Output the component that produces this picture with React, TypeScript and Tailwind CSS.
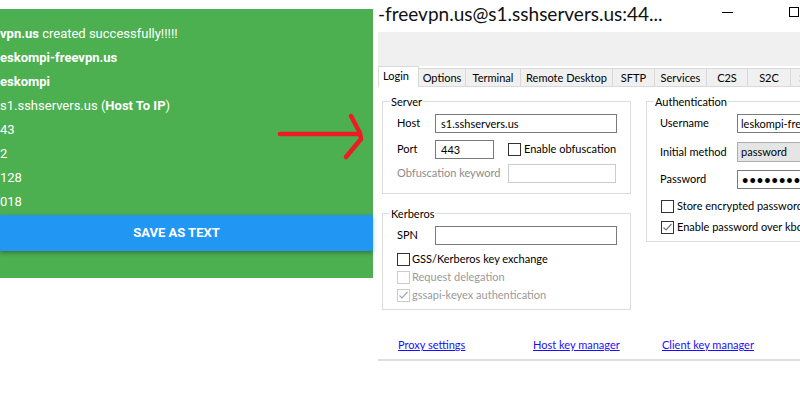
import React from "react";

const ui = "font-['Lato','Liberation_Sans',sans-serif] text-[11px] whitespace-nowrap";

function Box({ checked, disabled }: { checked?: boolean; disabled?: boolean }) {
  return (
    <span
      className={`w-[13px] h-[13px] shrink-0 border bg-white flex items-center justify-center ${
        disabled ? "border-[#cccccc]" : "border-[#333333]"
      }`}
    >
      {checked && (
        <svg width="11" height="11" viewBox="0 0 11 11">
          <path d="M1.5 5.5 L4 8 L9.5 2" fill="none" stroke={disabled ? "#a8a8a8" : "#777777"} strokeWidth="1.2" />
        </svg>
      )}
    </span>
  );
}

function Group({ title, className, children }: { title: string; className?: string; children: React.ReactNode }) {
  return (
    <fieldset className={`border border-[#dcdcdc] p-0 m-0 ${className ?? ""}`}>
      <legend className="ml-[7px] px-[1px] leading-[15px] text-black">{title}</legend>
      {children}
    </fieldset>
  );
}

export default function App() {
  const tabs = [
    { name: "Options", w: "w-[47px]" },
    { name: "Terminal", w: "w-[55px]" },
    { name: "Remote Desktop", w: "w-[92px]" },
    { name: "SFTP", w: "w-[42px]" },
    { name: "Services", w: "w-[52px]" },
    { name: "C2S", w: "w-[41px]" },
    { name: "S2C", w: "w-[43px]" },
  ];

  return (
    <div className="w-[800px] h-[416px] overflow-hidden bg-white relative flex">
      {/* Left: green result card */}
      <div className="w-[373px] shrink-0 mt-[9px] h-[269px] bg-[#4caf50] flex flex-col pt-[13px] font-['Roboto',sans-serif] text-white text-[13px]">
        <div className="h-[24px] leading-[24px] whitespace-nowrap">
          <b>vpn.us</b> created successfully!!!!!
        </div>
        <div className="h-[24px] leading-[24px] font-bold">eskompi-freevpn.us</div>
        <div className="h-[24px] leading-[24px] font-bold">eskompi</div>
        <div className="h-[24px] leading-[24px]">
          s1.sshservers.us (<b>Host To IP</b>)
        </div>
        <div className="h-[24px] leading-[24px]">43</div>
        <div className="h-[24px] leading-[24px]">2</div>
        <div className="h-[24px] leading-[24px]">128</div>
        <div className="h-[24px] leading-[24px]">018</div>
        <div className="mt-[1px] h-[36px] bg-[#2196f3] shadow-[0_2px_4px_rgba(0,0,0,0.3)] flex items-center justify-center pr-[20px] font-bold">
          SAVE AS TEXT
        </div>
      </div>

      <div className="w-[5px] shrink-0" />

      {/* Right: client window */}
      <div className={`flex-1 min-w-0 flex flex-col ${ui}`}>
        <div className="h-[32px] flex">
          <div className="text-[19px] leading-[28px] text-[#111]">-freevpn.us@s1.sshservers.us:44...</div>
          <div className="ml-auto mt-[7px] h-[10px] flex items-center">
            <span className="w-[11px] h-[1px] bg-black" />
            <span className="ml-[56px] mr-[1px] w-[10px] h-[10px] border border-black" />
          </div>
        </div>

        <div className="h-[34px] bg-[#f0f0f0]" />

        {/* Tabs */}
        <div className="h-[21px] flex items-end">
          <div className="w-[41px] h-[21px] shrink-0 bg-white border border-b-0 border-[#d9d9d9] pl-[4px] leading-[18px] text-black">
            Login
          </div>
          {tabs.map((t) => (
            <div
              key={t.name}
              className={`${t.w} h-[19px] shrink-0 bg-[#f0f0f0] border border-l-0 border-[#d9d9d9] text-center leading-[18px] text-black`}
            >
              {t.name}
            </div>
          ))}
          <div className="w-[40px] h-[19px] shrink-0 bg-[#f0f0f0] border border-l-0 border-[#d9d9d9] pl-[8px] leading-[18px] text-[#4a90e2]">
            SSH
          </div>
        </div>

        {/* Tab body */}
        <div className="flex">
          <div className="ml-[4px] w-[249px] shrink-0 flex flex-col">
            <Group title="Server" className="mt-[7px]">
              <div className="pt-[5px] pl-[14px] pr-[13px] pb-[10px]">
                <div className="h-[19px] flex items-center">
                  <span className="w-[38px]">Host</span>
                  <span className="flex-1 h-[19px] border border-[#7a7a7a] px-[5px] leading-[17px]">s1.sshservers.us</span>
                </div>
                <div className="mt-[7px] h-[19px] flex items-center">
                  <span className="w-[38px]">Port</span>
                  <span className="w-[59px] h-[19px] border border-[#7a7a7a] px-[5px] leading-[17px]">443</span>
                  <span className="ml-[14px]">
                    <Box />
                  </span>
                  <span className="ml-[3px]">Enable obfuscation</span>
                </div>
                <div className="mt-[5px] h-[19px] flex items-center">
                  <span className="w-[111px] text-[#8c8c8c]">Obfuscation keyword</span>
                  <span className="w-[108px] h-[19px] border border-[#cccccc]" />
                </div>
              </div>
            </Group>

            <Group title="Kerberos" className="mt-[12px]">
              <div className="pt-[5px] pl-[14px] pr-[13px] pb-[5px]">
                <div className="h-[19px] flex items-center">
                  <span className="w-[38px]">SPN</span>
                  <span className="flex-1 h-[19px] border border-[#7a7a7a]" />
                </div>
                <div className="mt-[5px] h-[18px] flex items-center gap-[2px]">
                  <Box />
                  <span>GSS/Kerberos key exchange</span>
                </div>
                <div className="h-[18px] flex items-center gap-[2px] text-[#9a9a9a]">
                  <Box disabled />
                  <span>Request delegation</span>
                </div>
                <div className="h-[18px] flex items-center gap-[2px] text-[#9a9a9a]">
                  <Box checked disabled />
                  <span>gssapi-keyex authentication</span>
                </div>
              </div>
            </Group>
          </div>

          <div className="ml-[15px] w-[200px] shrink-0">
            <Group title="Authentication" className="mt-[7px]">
              <div className="pt-[5px] pl-[13px] pb-[3px]">
                <div className="h-[19px] flex items-center">
                  <span className="w-[77px] shrink-0">Username</span>
                  <span className="w-[100px] shrink-0 h-[19px] border border-[#7a7a7a] px-[3px] leading-[17px] overflow-hidden">
                    leskompi-freevpn.us
                  </span>
                </div>
                <div className="mt-[9px] h-[20px] flex items-center">
                  <span className="w-[77px] shrink-0">Initial method</span>
                  <span className="w-[100px] shrink-0 h-[20px] bg-[#e5e5e5] border border-[#adadad] px-[3px] leading-[18px]">
                    password
                  </span>
                </div>
                <div className="mt-[8px] h-[19px] flex items-center">
                  <span className="w-[77px] shrink-0">Password</span>
                  <span className="w-[100px] shrink-0 h-[19px] border border-[#7a7a7a] px-[4px] leading-[17px] font-bold tracking-[1px]">
                    ••••••••
                  </span>
                </div>
                <div className="mt-[7px] h-[21px] flex items-center gap-[3px] pl-[1px]">
                  <Box />
                  <span>Store encrypted password</span>
                </div>
                <div className="h-[21px] flex items-center gap-[3px] pl-[1px]">
                  <Box checked />
                  <span>Enable password over kbd-interactive</span>
                </div>
              </div>
            </Group>
          </div>
        </div>

        {/* Links */}
        <div className="mt-[27px] h-[16px] flex pl-[20px] text-[#1a0dff] leading-[16px]">
          <span className="w-[135px] shrink-0">
            <span className="underline">Proxy settings</span>
          </span>
          <span className="w-[129px] shrink-0">
            <span className="underline">Host key manager</span>
          </span>
          <span className="underline">Client key manager</span>
        </div>
        <div className="mt-[6px] h-[2px] bg-[#dedede]" />
      </div>

      {/* red annotation arrow */}
      <svg className="absolute left-0 top-0 pointer-events-none" width="800" height="416">
        <path d="M280 134 L358 134" stroke="#ed1c24" strokeWidth="4.5" strokeLinecap="round" fill="none" />
        <path d="M351 116 L360 133 L361 139 L346 157" stroke="#ed1c24" strokeWidth="4.5" strokeLinecap="round" strokeLinejoin="round" fill="none" />
      </svg>
    </div>
  );
}
